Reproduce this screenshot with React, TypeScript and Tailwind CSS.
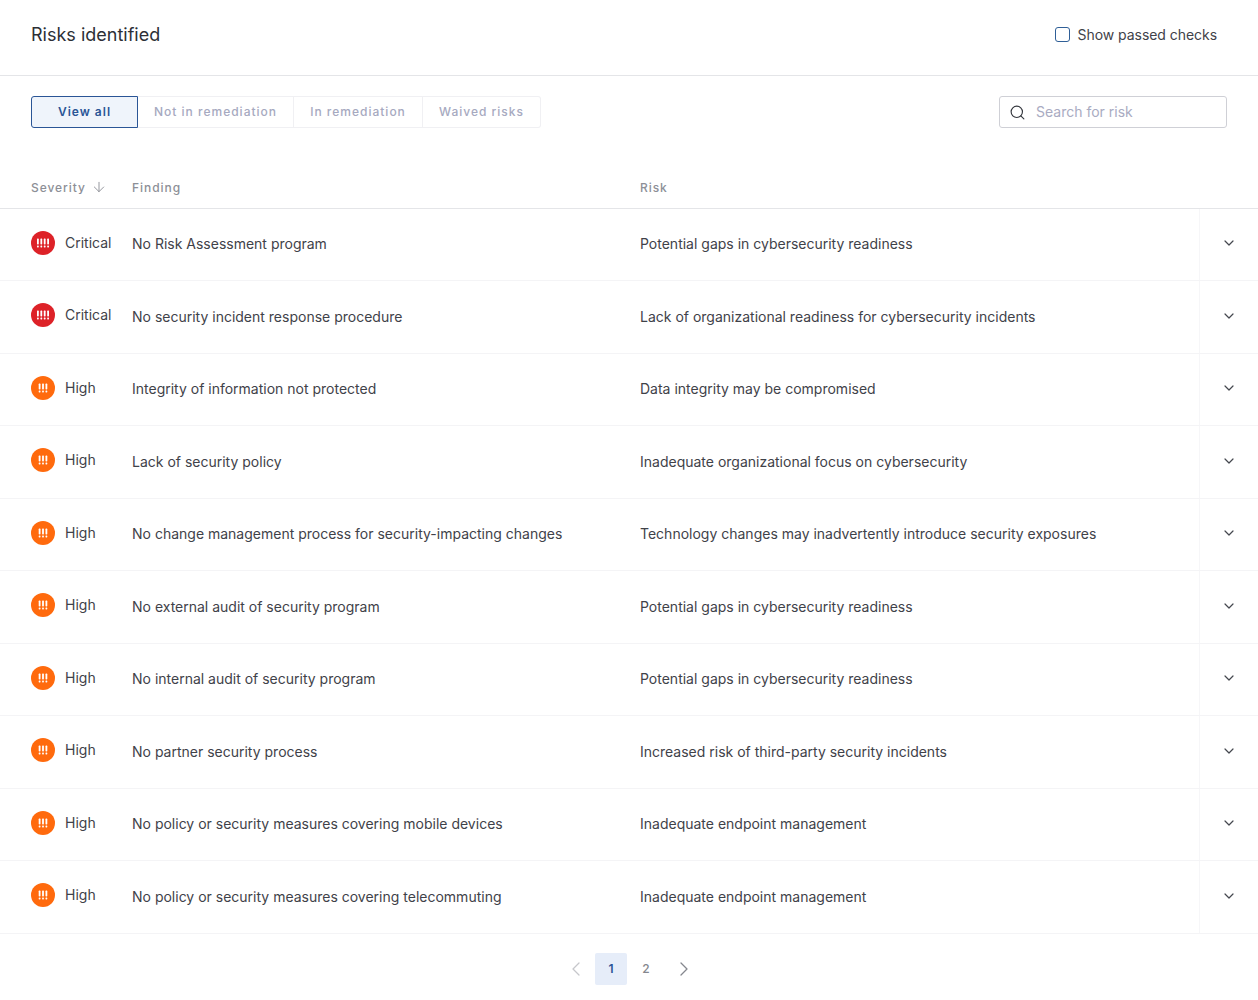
import { ArrowDown, ChevronDown, ChevronLeft, ChevronRight, Search } from 'lucide-react'

const rows = [
  { level: 'Critical', finding: 'No Risk Assessment program', risk: 'Potential gaps in cybersecurity readiness' },
  { level: 'Critical', finding: 'No security incident response procedure', risk: 'Lack of organizational readiness for cybersecurity incidents' },
  { level: 'High', finding: 'Integrity of information not protected', risk: 'Data integrity may be compromised' },
  { level: 'High', finding: 'Lack of security policy', risk: 'Inadequate organizational focus on cybersecurity' },
  { level: 'High', finding: 'No change management process for security-impacting changes', risk: 'Technology changes may inadvertently introduce security exposures' },
  { level: 'High', finding: 'No external audit of security program', risk: 'Potential gaps in cybersecurity readiness' },
  { level: 'High', finding: 'No internal audit of security program', risk: 'Potential gaps in cybersecurity readiness' },
  { level: 'High', finding: 'No partner security process', risk: 'Increased risk of third-party security incidents' },
  { level: 'High', finding: 'No policy or security measures covering mobile devices', risk: 'Inadequate endpoint management' },
  { level: 'High', finding: 'No policy or security measures covering telecommuting', risk: 'Inadequate endpoint management' },
]

const tabs = [
  { label: 'Not in remediation', width: 'w-[156px]' },
  { label: 'In remediation', width: 'w-[129px]' },
  { label: 'Waived risks', width: 'w-[118px]' },
]

function SeverityIcon({ level }: { level: string }) {
  const critical = level === 'Critical'
  const xs = critical ? [6.9, 10.3, 13.7, 17.1] : [8.6, 12, 15.4]
  return (
    <svg width="24" height="24" viewBox="0 0 24 24" className="mt-[1px] shrink-0">
      <circle cx="12" cy="12" r="12" fill={critical ? '#dd2228' : '#ff6a0d'} />
      {xs.map((x) => (
        <g key={x} fill="#fff">
          <rect x={x - 0.9} y="7.6" width="1.8" height="5.8" rx="0.6" />
          <rect x={x - 0.9} y="14.6" width="1.8" height="1.8" rx="0.6" />
        </g>
      ))}
    </svg>
  )
}

export default function App() {
  return (
    <div className="h-[1000px] overflow-hidden bg-white font-['Inter',sans-serif] text-[#3f4249]">
      {/* Header */}
      <div className="flex h-[76px] items-center justify-between border-b border-[#e4e5e8] pb-[6px] pl-[31px] pr-[41px]">
        <h1 className="text-[18px] font-normal text-[#2c2f36]">Risks identified</h1>
        <label className="flex items-center gap-2 text-[14px] tracking-[-0.05px] text-[#3f4249]">
          <span className="h-[15px] w-[15px] rounded-[3px] border-[1.5px] border-[#2f5f97]" />
          Show passed checks
        </label>
      </div>

      {/* Filters */}
      <div className="flex items-center justify-between pl-[31px] pr-[31px] pt-[20px]">
        <div className="flex h-8 text-[12px] font-medium tracking-[1px]">
          <div className="flex w-[107px] items-center justify-center rounded-l-[3px] border border-[#2a5596] bg-[#eff4fb] font-semibold text-[#2a5596]">
            View all
          </div>
          {tabs.map((tab, i) => (
            <div
              key={tab.label}
              className={`flex ${tab.width} items-center justify-center border-y border-r border-[#f0f0f3] text-[#a6a9c0] ${i === 2 ? 'rounded-r-[3px]' : ''}`}
            >
              {tab.label}
            </div>
          ))}
        </div>
        <div className="flex h-8 w-[228px] items-center gap-[10px] rounded-[3px] border border-[#cfd0d6] pl-[9px]">
          <Search size={17} strokeWidth={1.6} className="text-[#33363d]" />
          <span className="pb-[1px] text-[14px] text-[#a9abc2]">Search for risk</span>
        </div>
      </div>

      {/* Table header */}
      <div className="mt-[48px] grid h-[32.5px] grid-cols-[132px_508px_1fr] border-b border-[#e4e5e8] pb-[7px] text-[12px] font-medium tracking-[0.95px] text-[#8d8f97]">
        <div className="flex items-center gap-[5px] pl-[31px]">
          Severity
          <ArrowDown size={16} strokeWidth={1.4} className="mb-[3px]" />
        </div>
        <div className="flex items-center">Finding</div>
        <div className="flex items-center">Risk</div>
      </div>

      {/* Rows */}
      {rows.map((row, i) => (
        <div
          key={i}
          className="grid h-[72.5px] grid-cols-[132px_508px_559px_1fr] border-b border-[#f4f4f6] text-[14px]"
        >
          <div className="flex items-center gap-[10px] pb-[4px] pl-[31px]">
            <SeverityIcon level={row.level} />
            {row.level}
          </div>
          <div className="flex items-center pb-[1px]">{row.finding}</div>
          <div className="flex items-center pb-[1px]">{row.risk}</div>
          <div className="flex items-center justify-center border-l border-[#f6f6f8] pb-[2px]">
            <ChevronDown size={16} strokeWidth={1.8} className="text-[#44474e]" />
          </div>
        </div>
      ))}

      {/* Pagination */}
      <div className="mt-[19.5px] flex items-center justify-center pl-[2px] text-[12px] font-medium">
        <ChevronLeft size={24} strokeWidth={1.3} className="mr-[7px] text-[#c6c7cb]" />
        <div className="flex h-8 w-8 items-center justify-center rounded-[2px] bg-[#e6edf9] pb-[1px] font-semibold text-[#2a5596]">1</div>
        <div className="flex h-8 w-[38px] items-center justify-center pb-[1px] text-[#85878e]">2</div>
        <ChevronRight size={24} strokeWidth={1.3} className="ml-[7px] text-[#85878e]" />
      </div>
    </div>
  )
}
